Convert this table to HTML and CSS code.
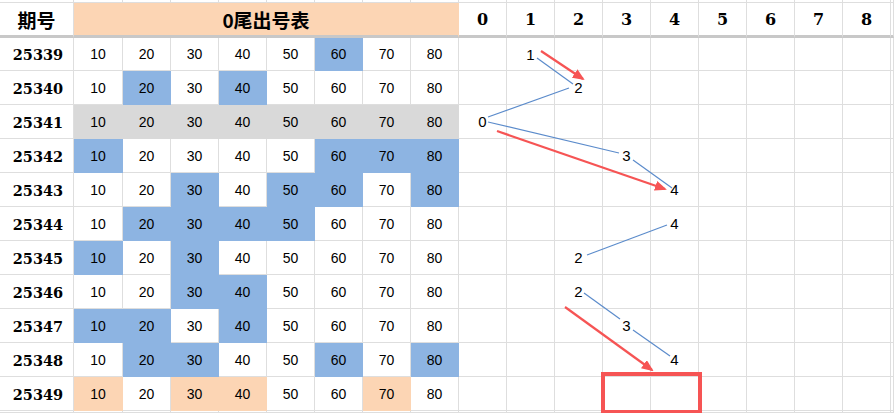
FILE: index.html
```html
<!DOCTYPE html>
<html lang="zh">
<head>
<meta charset="utf-8">
<title>0尾出号表</title>
<link rel="stylesheet" href="styles.css">
</head>
<body>
<div class="page">
<div class="sheet">
<!-- top partial row -->
<div class="c"></div><div class="c"></div><div class="c"></div><div class="c"></div><div class="c"></div><div class="c"></div><div class="c"></div><div class="c"></div><div class="c"></div><div class="c"></div><div class="c"></div><div class="c"></div><div class="c"></div><div class="c"></div><div class="c"></div><div class="c"></div><div class="c"></div><div class="c"></div><div class="c"></div>
<!-- header -->
<div class="c hd hl">期号</div>
<div class="c hd title">0尾出号表</div>
<div class="c hd dh">0</div><div class="c hd dh">1</div><div class="c hd dh">2</div><div class="c hd dh">3</div><div class="c hd dh">4</div><div class="c hd dh">5</div><div class="c hd dh">6</div><div class="c hd dh">7</div><div class="c hd dh">8</div><div class="c hd"></div>
<!-- 25339 -->
<div class="c lab">25339</div>
<div class="c n">10</div><div class="c n">20</div><div class="c n">30</div><div class="c n">40</div><div class="c n">50</div><div class="c n b">60</div><div class="c n">70</div><div class="c n">80</div>
<div class="c ch"></div><div class="c ch">1</div><div class="c ch"></div><div class="c ch"></div><div class="c ch"></div><div class="c ch"></div><div class="c ch"></div><div class="c ch"></div><div class="c ch"></div><div class="c"></div>
<!-- 25340 -->
<div class="c lab">25340</div>
<div class="c n">10</div><div class="c n b">20</div><div class="c n">30</div><div class="c n b">40</div><div class="c n">50</div><div class="c n">60</div><div class="c n">70</div><div class="c n">80</div>
<div class="c ch"></div><div class="c ch"></div><div class="c ch">2</div><div class="c ch"></div><div class="c ch"></div><div class="c ch"></div><div class="c ch"></div><div class="c ch"></div><div class="c ch"></div><div class="c"></div>
<!-- 25341 -->
<div class="c lab">25341</div>
<div class="c n g">10</div><div class="c n g">20</div><div class="c n g">30</div><div class="c n g">40</div><div class="c n g">50</div><div class="c n g">60</div><div class="c n g">70</div><div class="c n g">80</div>
<div class="c ch">0</div><div class="c ch"></div><div class="c ch"></div><div class="c ch"></div><div class="c ch"></div><div class="c ch"></div><div class="c ch"></div><div class="c ch"></div><div class="c ch"></div><div class="c"></div>
<!-- 25342 -->
<div class="c lab">25342</div>
<div class="c n b">10</div><div class="c n">20</div><div class="c n">30</div><div class="c n">40</div><div class="c n">50</div><div class="c n b">60</div><div class="c n b">70</div><div class="c n b">80</div>
<div class="c ch"></div><div class="c ch"></div><div class="c ch"></div><div class="c ch">3</div><div class="c ch"></div><div class="c ch"></div><div class="c ch"></div><div class="c ch"></div><div class="c ch"></div><div class="c"></div>
<!-- 25343 -->
<div class="c lab">25343</div>
<div class="c n">10</div><div class="c n">20</div><div class="c n b">30</div><div class="c n">40</div><div class="c n b">50</div><div class="c n b">60</div><div class="c n">70</div><div class="c n b">80</div>
<div class="c ch"></div><div class="c ch"></div><div class="c ch"></div><div class="c ch"></div><div class="c ch">4</div><div class="c ch"></div><div class="c ch"></div><div class="c ch"></div><div class="c ch"></div><div class="c"></div>
<!-- 25344 -->
<div class="c lab">25344</div>
<div class="c n">10</div><div class="c n b">20</div><div class="c n b">30</div><div class="c n b">40</div><div class="c n b">50</div><div class="c n">60</div><div class="c n">70</div><div class="c n">80</div>
<div class="c ch"></div><div class="c ch"></div><div class="c ch"></div><div class="c ch"></div><div class="c ch">4</div><div class="c ch"></div><div class="c ch"></div><div class="c ch"></div><div class="c ch"></div><div class="c"></div>
<!-- 25345 -->
<div class="c lab">25345</div>
<div class="c n b">10</div><div class="c n">20</div><div class="c n b">30</div><div class="c n">40</div><div class="c n">50</div><div class="c n">60</div><div class="c n">70</div><div class="c n">80</div>
<div class="c ch"></div><div class="c ch"></div><div class="c ch">2</div><div class="c ch"></div><div class="c ch"></div><div class="c ch"></div><div class="c ch"></div><div class="c ch"></div><div class="c ch"></div><div class="c"></div>
<!-- 25346 -->
<div class="c lab">25346</div>
<div class="c n">10</div><div class="c n">20</div><div class="c n b">30</div><div class="c n b">40</div><div class="c n">50</div><div class="c n">60</div><div class="c n">70</div><div class="c n">80</div>
<div class="c ch"></div><div class="c ch"></div><div class="c ch">2</div><div class="c ch"></div><div class="c ch"></div><div class="c ch"></div><div class="c ch"></div><div class="c ch"></div><div class="c ch"></div><div class="c"></div>
<!-- 25347 -->
<div class="c lab">25347</div>
<div class="c n b">10</div><div class="c n b">20</div><div class="c n">30</div><div class="c n b">40</div><div class="c n">50</div><div class="c n">60</div><div class="c n">70</div><div class="c n">80</div>
<div class="c ch"></div><div class="c ch"></div><div class="c ch"></div><div class="c ch">3</div><div class="c ch"></div><div class="c ch"></div><div class="c ch"></div><div class="c ch"></div><div class="c ch"></div><div class="c"></div>
<!-- 25348 -->
<div class="c lab">25348</div>
<div class="c n">10</div><div class="c n b">20</div><div class="c n b">30</div><div class="c n">40</div><div class="c n">50</div><div class="c n b">60</div><div class="c n">70</div><div class="c n b">80</div>
<div class="c ch"></div><div class="c ch"></div><div class="c ch"></div><div class="c ch"></div><div class="c ch">4</div><div class="c ch"></div><div class="c ch"></div><div class="c ch"></div><div class="c ch"></div><div class="c"></div>
<!-- 25349 -->
<div class="c lab">25349</div>
<div class="c n o">10</div><div class="c n">20</div><div class="c n o">30</div><div class="c n o">40</div><div class="c n">50</div><div class="c n">60</div><div class="c n o">70</div><div class="c n">80</div>
<div class="c ch"></div><div class="c ch"></div><div class="c ch"></div><div class="c ch"></div><div class="c ch"></div><div class="c ch"></div><div class="c ch"></div><div class="c ch"></div><div class="c ch"></div><div class="c"></div>
<!-- bottom partial row -->
<div class="c"></div><div class="c"></div><div class="c"></div><div class="c"></div><div class="c"></div><div class="c"></div><div class="c"></div><div class="c"></div><div class="c"></div><div class="c"></div><div class="c"></div><div class="c"></div><div class="c"></div><div class="c"></div><div class="c"></div><div class="c"></div><div class="c"></div><div class="c"></div><div class="c"></div>
</div>
<svg class="overlay" width="894" height="413" viewBox="0 0 894 413" xmlns="http://www.w3.org/2000/svg">
<defs>
<marker id="ah" viewBox="0 0 12 10" refX="10" refY="5" markerWidth="12" markerHeight="10" markerUnits="userSpaceOnUse" orient="auto">
<path d="M0,0 L12,5 L0,10 z" fill="#F65454"/>
</marker>
</defs>
<g class="trend">
<line x1="537" y1="58" x2="573" y2="84"/>
<line x1="569" y1="88" x2="488" y2="117"/>
<line x1="488" y1="122" x2="619" y2="153"/>
<line x1="633" y1="160" x2="672" y2="188"/>
<line x1="667" y1="225" x2="587" y2="255"/>
<line x1="584" y1="293" x2="620" y2="319"/>
<line x1="633" y1="330" x2="670" y2="356"/>
</g>
<g class="arrows">
<line x1="541" y1="51" x2="583" y2="79" marker-end="url(#ah)"/>
<line x1="497" y1="131" x2="665" y2="189" marker-end="url(#ah)"/>
<line x1="565" y1="307" x2="652" y2="370" marker-end="url(#ah)"/>
</g>
<rect class="mark" x="603" y="374" width="97" height="38"/>
</svg>
</div>
</body>
</html>
```
FILE: styles.css
```css
html, body {
  margin: 0;
  padding: 0;
  background: #fff;
  overflow: hidden;
}
.page {
  position: relative;
  width: 894px;
  height: 413px;
  overflow: hidden;
}
.sheet {
  display: grid;
  grid-template-columns: 74px 49px repeat(16, 48px) 3px;
  grid-template-rows: 3px 35px 33px repeat(10, 34px) 1fr;
  width: 894px;
  height: 413px;
}
.c {
  box-sizing: border-box;
  border-right: 1px solid #DEDEDE;
  border-bottom: 1px solid #DEDEDE;
  background: #fff;
  display: flex;
  align-items: center;
  justify-content: center;
  color: #000;
  overflow: hidden;
  white-space: nowrap;
}
.hd {
  border-bottom: 3px solid #C8C8C8;
}
.hl, .title {
  font-family: "Noto Sans CJK SC", sans-serif;
  font-weight: 700;
  font-size: 19px;
}
.title {
  grid-column: span 8;
  background: #FCD5B4;
  border-right-color: #FCD5B4;
}
.dh {
  font-family: "DejaVu Serif", serif;
  font-weight: 700;
  font-size: 16px;
}
.lab {
  font-family: "DejaVu Serif", serif;
  font-weight: 700;
  font-size: 14.5px;
  padding-left: 3px;
  padding-top: 1px;
}
.n {
  font-family: "Liberation Sans", sans-serif;
  font-size: 14px;
}
.ch {
  font-family: "Liberation Sans", sans-serif;
  font-size: 15px;
}
.b {
  background: #8DB4E2;
  border-color: #8DB4E2;
}
.g {
  background: #D9D9D9;
  border-color: #D9D9D9;
}
.o {
  background: #FCD5B4;
  border-color: #FCD5B4;
}
.overlay {
  position: absolute;
  left: 0;
  top: 0;
  pointer-events: none;
}
.trend line {
  stroke: #5B8BCB;
  stroke-width: 1.2;
}
.arrows line {
  stroke: #F65454;
  stroke-width: 2.2;
}
.mark {
  fill: none;
  stroke: #F65454;
  stroke-width: 4;
}
```
